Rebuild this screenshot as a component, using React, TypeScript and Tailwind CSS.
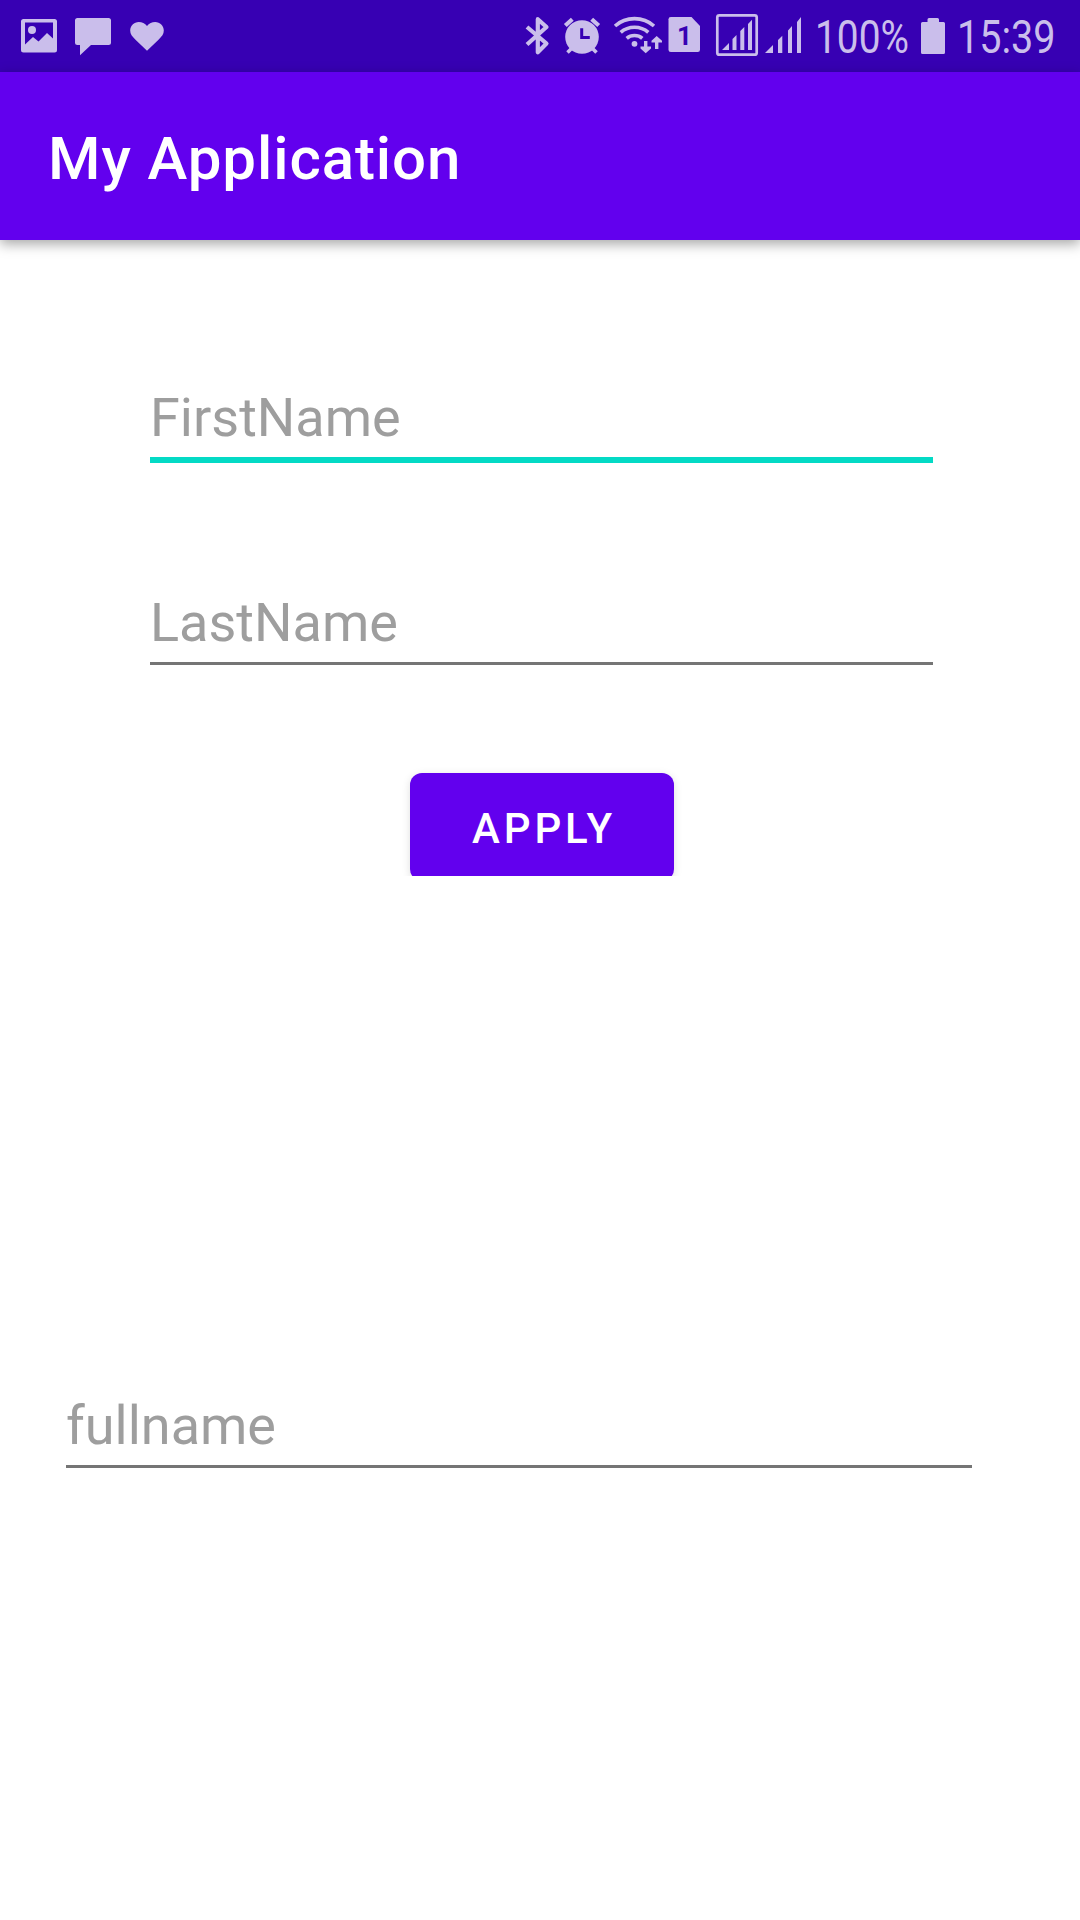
import type { ReactNode } from 'react';

// Each status icon is drawn on the 72px-high bar's own coordinate system.
function StatusIcon({ x, width, children }: { x: number; width: number; children: ReactNode }) {
  return (
    <svg className="h-[72px] shrink-0" width={width} height={72} viewBox={`${x} 0 ${width} 72`} fill="currentColor">
      {children}
    </svg>
  );
}

function StatusBar() {
  return (
    <div className="flex h-[72px] justify-between overflow-hidden bg-[#3700b3] text-[#cabeeb]">
      <div className="flex">
        <StatusIcon x={0} width={66}>
          <path
            fillRule="evenodd"
            d="M23.5 19H54.5Q57 19 57 21.5V50Q57 52.5 54.5 52.5H23.5Q21 52.5 21 50V21.5Q21 19 23.5 19ZM25 22.5V44.5L33 37L38.5 41.5L47 33L53 38.5V22.5Z"
          />
          <circle cx="32" cy="30" r="4" />
        </StatusIcon>
        <StatusIcon x={66} width={54}>
          <path d="M77.5 18H108.5Q111 18 111 20.5V42.5Q111 45 108.5 45H91L80 55.3V45H77.5Q75 45 75 42.5V20.5Q75 18 77.5 18Z" />
        </StatusIcon>
        <StatusIcon x={120} width={60}>
          <path d="M147 50.7L135.5 39.8C132 36.4 130.2 34.2 130.2 30.6C130.2 25.8 134 22 138.8 22C142 22 145 23.4 147 26C149 23.4 152 22 155.2 22C160 22 163.8 25.8 163.8 30.6C163.8 34.2 162 36.4 158.5 39.8Z" />
        </StatusIcon>
      </div>

      <div className="flex">
        <StatusIcon x={516} width={42}>
          <path
            fill="none"
            stroke="currentColor"
            strokeWidth="4.2"
            strokeLinejoin="round"
            d="M527 27L546.5 43.5L537.8 52.2V19.2L546.5 27L527 44.5"
          />
        </StatusIcon>
        <StatusIcon x={558} width={50}>
          <circle cx="582" cy="37" r="16.8" />
          <g fill="none" stroke="currentColor" strokeWidth="4.2">
            <path d="M565.3 25.5L572.3 19.2M598.7 25.5L591.7 19.2" />
            <path strokeWidth="3.6" d="M567.5 52.5L572 48M596.5 52.5L592 48" />
          </g>
          <path fill="none" stroke="#3700b3" strokeWidth="3" d="M581.7 28.3V37.4H589.8" />
        </StatusIcon>
        <StatusIcon x={608} width={56}>
          <g fill="none" stroke="currentColor" strokeWidth="3.6">
            <path d="M615 26C626 16.2 643 16.2 654 26" />
            <path d="M620.7 32.3C628.5 25.5 640.5 25.5 648.3 32.3" />
            <path d="M626.7 38.3C631 34.5 638 34.5 642.3 38.3" />
            <path strokeWidth="3.4" d="M645.7 41V49M656.7 49V40" />
          </g>
          <circle cx="634.5" cy="43.8" r="2.9" />
          <path d="M640.5 46.5H651V48.5L645.7 53.3L640.5 48.5ZM651.5 42.5H662V40.8L656.7 36L651.5 40.8Z" />
        </StatusIcon>
        <span className="relative flex h-[72px] w-[50px]">
          <StatusIcon x={664} width={50}>
            <path d="M670.8 17H691.5L700 26V49.7Q700 52 697.7 52H670.8Q668.5 52 668.5 49.7V19.3Q668.5 17 670.8 17Z" />
          </StatusIcon>
          <span className="absolute left-[13px] top-[22px] text-[26px] font-bold leading-[28px] text-[#3700b3]">1</span>
        </span>
        <StatusIcon x={714} width={48}>
          <rect x="717.3" y="15.3" width="39.4" height="39.4" rx="2" fill="none" stroke="currentColor" strokeWidth="2.7" />
          <path d="M722 50L729 43V50ZM732.5 50V39L736.5 35V50ZM740.3 50V31L744.3 27V50ZM748 50V24L752 19.7V50Z" />
        </StatusIcon>
        <StatusIcon x={762} width={54}>
          <path d="M765 53L773 45V53ZM778 53V40L782.3 35.7V53ZM788 53V30.5L792 26V53ZM797 53V22L801 17V53Z" />
        </StatusIcon>
        <span className="h-[72px] w-[102px] whitespace-nowrap">
          <span className="-ml-px inline-block origin-left scale-x-[0.845] text-[46px] leading-[75px]">100%</span>
        </span>
        <StatusIcon x={918} width={38}>
          <path d="M922.5 22H927.5V19.5Q927.5 18 929 18H937.5Q939 18 939 19.5V22H943.5Q945 22 945 23.5V52.5Q945 54 943.5 54H922.5Q921 54 921 52.5V23.5Q921 22 922.5 22Z" />
        </StatusIcon>
        <span className="h-[72px] w-[124px] whitespace-nowrap">
          <span className="ml-px inline-block origin-left scale-x-[0.86] text-[46px] leading-[75px]">15:39</span>
        </span>
      </div>
    </div>
  );
}

function Field({ label, focused = false }: { label: string; focused?: boolean }) {
  return (
    <div className={focused ? 'border-b-[6px] border-[#03dac5]' : 'border-b-[3px] border-[#757575]'}>
      <div className="h-[80px] text-[54px] leading-[82px] text-[#9e9e9e]">{label}</div>
    </div>
  );
}

export default function App() {
  return (
    <div className="flex h-[1920px] w-[1080px] flex-col overflow-hidden bg-white font-['Roboto',sans-serif]">
      <StatusBar />
      <header className="flex h-[168px] shrink-0 bg-[#6200ee] px-12 shadow-[0_4px_12px_rgba(0,0,0,0.35)]">
        <h1 className="text-[60px] font-medium leading-[173px] tracking-[0.92px] text-white">My Application</h1>
      </header>

      <main className="flex flex-col">
        <div className="ml-[150px] mt-[137px] w-[783px]">
          <Field label="FirstName" focused />
        </div>
        <div className="ml-[150px] mt-[119px] w-[783px]">
          <Field label="LastName" />
        </div>
        <div className="mt-[88px] flex h-[123px] overflow-hidden pl-[410px] pt-5">
          <button className="h-[108px] w-[264px] shrink-0 rounded-xl bg-[#6200ee] pl-1 text-[42px] font-medium leading-[111px] tracking-[3.9px] text-white shadow-[0_2px_8px_rgba(0,0,0,0.13)]">
            APPLY
          </button>
        </div>
        <div className="ml-[66px] mt-[509px] w-[906px]">
          <Field label="fullname" />
        </div>
      </main>
    </div>
  );
}
